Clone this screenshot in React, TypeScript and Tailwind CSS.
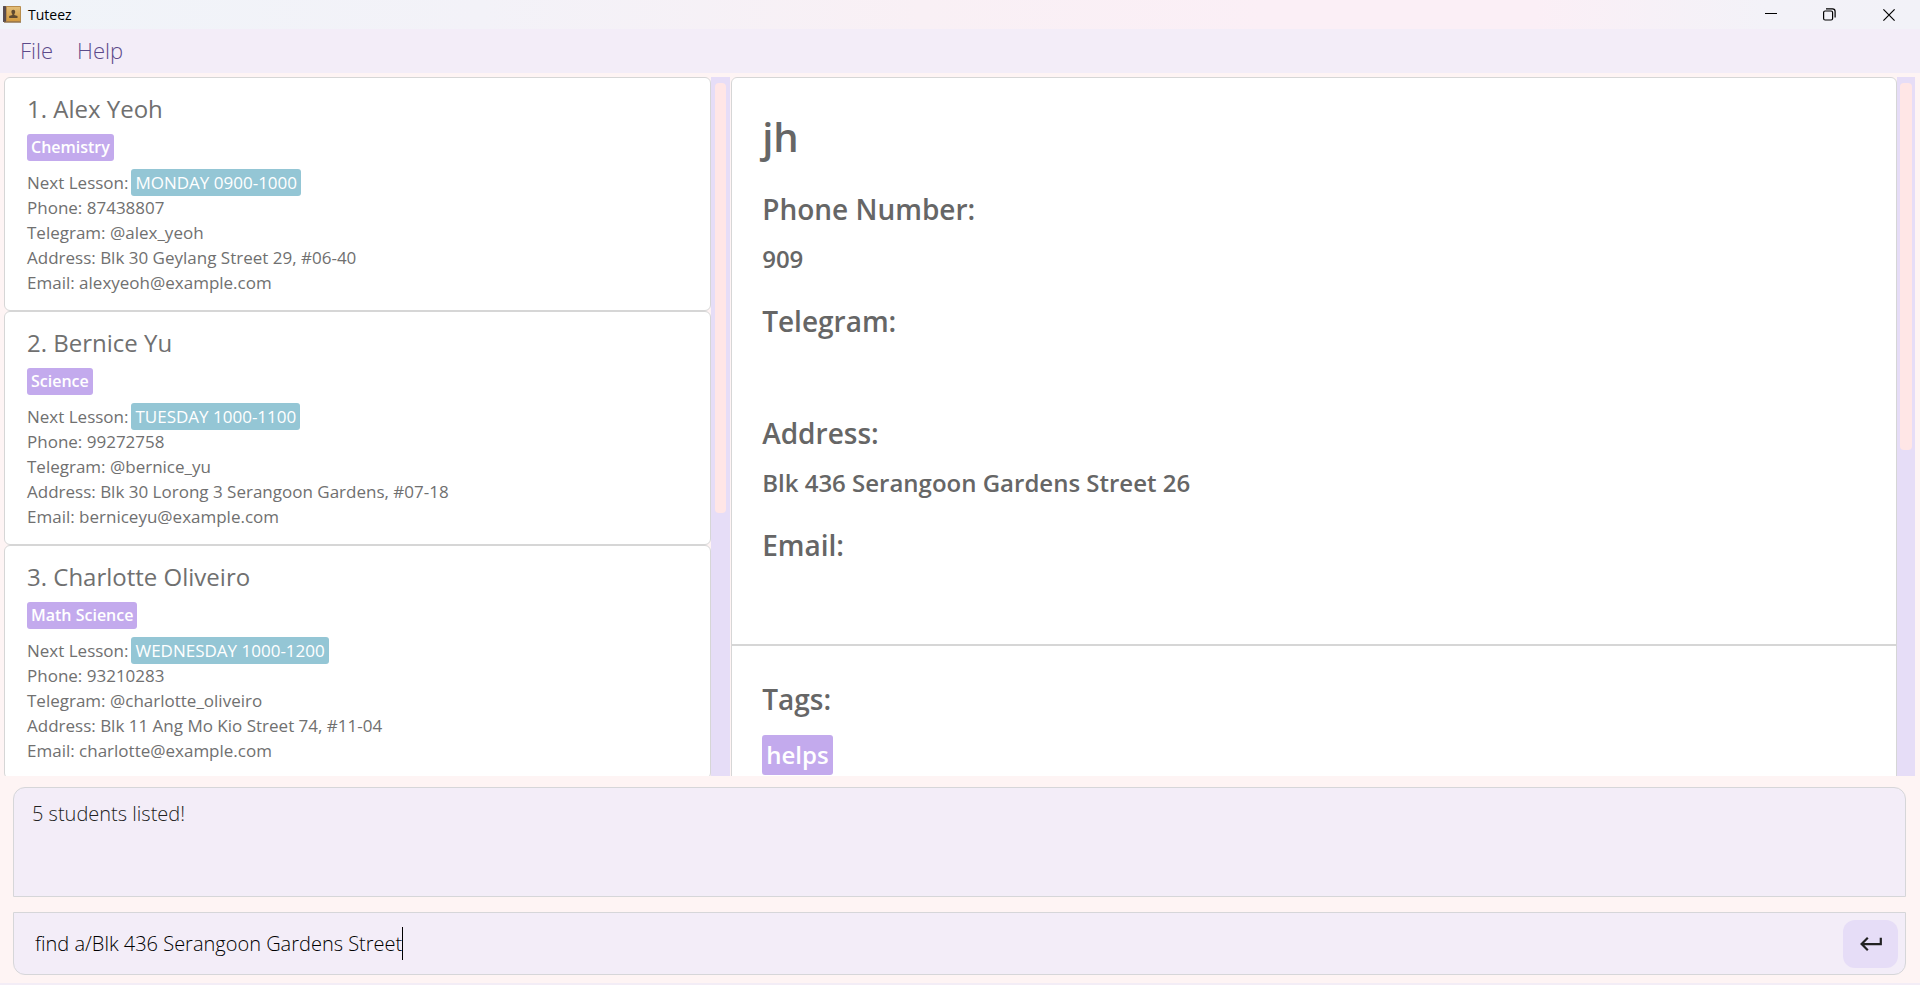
import React from "react";

type Student = {
  name: string;
  subject: string;
  lesson: string;
  phone: string;
  telegram: string;
  address: string;
  email: string;
};

const students: Student[] = [
  {
    name: "Alex Yeoh",
    subject: "Chemistry",
    lesson: "MONDAY 0900-1000",
    phone: "87438807",
    telegram: "@alex_yeoh",
    address: "Blk 30 Geylang Street 29, #06-40",
    email: "alexyeoh@example.com",
  },
  {
    name: "Bernice Yu",
    subject: "Science",
    lesson: "TUESDAY 1000-1100",
    phone: "99272758",
    telegram: "@bernice_yu",
    address: "Blk 30 Lorong 3 Serangoon Gardens, #07-18",
    email: "berniceyu@example.com",
  },
  {
    name: "Charlotte Oliveiro",
    subject: "Math Science",
    lesson: "WEDNESDAY 1000-1200",
    phone: "93210283",
    telegram: "@charlotte_oliveiro",
    address: "Blk 11 Ang Mo Kio Street 74, #11-04",
    email: "charlotte@example.com",
  },
];

const details = [
  { label: "Phone Number:", value: "909" },
  { label: "Telegram:", value: "" },
  { label: "Address:", value: "Blk 436 Serangoon Gardens Street 26" },
  { label: "Email:", value: "" },
];

function AppIcon() {
  return (
    <svg width="18" height="17" viewBox="0 0 18 17" aria-hidden="true">
      <defs>
        <linearGradient id="cover" x1="0" y1="0" x2="0" y2="1">
          <stop offset="0" stopColor="#e2bd78" />
          <stop offset="1" stopColor="#d29a40" />
        </linearGradient>
      </defs>
      <rect x="0" y="0" width="18" height="16" rx="0.8" fill="#b98d4c" />
      <rect x="4" y="1" width="13" height="14" fill="url(#cover)" />
      <rect x="0" y="0" width="3" height="16" rx="0.6" fill="#574c50" />
      <rect x="1" y="15.5" width="17" height="1.2" fill="#8a6d44" />
      <path
        d="M10.3 3.800c1.200 0 1.900.9 1.900 2.100 0 .9-.4 1.600-.9 2v1.200l3.200 1v2H6.200v-2l3.100-1V7.900c-.5-.4-.9-1.100-.9-2 0-1.200.7-2.100 1.900-2.100z"
        fill="#604a30"
      />
    </svg>
  );
}

function TitleBar() {
  return (
    <header className="flex h-[29px] shrink-0 items-center justify-between bg-[linear-gradient(90deg,#f0f4f9_0%,#f3f2f8_25%,#f9f0f5_48%,#fbeff6_66%,#fbeff6_80%,#f3f2f8_92%,#f2f2f8_100%)] pl-[3px]">
      <div className="flex items-center gap-[7px] text-[14px] leading-5 text-black">
        <AppIcon />
        <span>Tuteez</span>
      </div>
      <div className="flex h-full">
        <button type="button" aria-label="Minimize" className="flex h-full w-[58px] items-center justify-center">
          <svg width="12" height="12" viewBox="0 0 12 12" fill="none" stroke="#000">
            <path d="M0 4.500H12" />
          </svg>
        </button>
        <button type="button" aria-label="Restore" className="flex h-full w-[58px] items-center justify-center">
          <svg width="13" height="13" viewBox="0 0 13 13" fill="none" stroke="#000" strokeWidth="1.200">
            <rect x="0.600" y="3" width="9" height="9" rx="1.500" />
            <path d="M3 0.800H9.500Q12.100 .8 12.100 3.400V9.600" />
          </svg>
        </button>
        <button type="button" aria-label="Close" className="flex h-full w-[62px] items-center justify-center">
          <svg width="12" height="12" viewBox="0 0 12 12" fill="none" stroke="#000" strokeWidth="1.200">
            <path d="M.4.4 11.600 11.600M11.600.4.4 11.600" />
          </svg>
        </button>
      </div>
    </header>
  );
}

function StudentCard({ student, index }: { student: Student; index: number }) {
  return (
    <li className="shrink-0 rounded-md border border-[#d6d6d6] bg-white px-[22px] pt-[15px] pb-[15px] text-[17px] leading-[25px] text-[#707070]">
      <h2 className="text-[24px] leading-8">
        {index}. {student.name}
      </h2>
      <div className="mt-[9px] mb-2 flex">
        <span className="rounded-[3px] bg-[#c3aaed] px-1 text-[16px] leading-[27px] font-semibold text-white">{student.subject}</span>
      </div>
      <div className="flex h-[26px] items-center gap-[3px] leading-[27px]">
        <span>Next Lesson:</span>
        <span className="rounded-[3px] bg-[#94c6d5] px-1 text-white">{student.lesson}</span>
      </div>
      <p>Phone: {student.phone}</p>
      <p>Telegram: {student.telegram}</p>
      <p>Address: {student.address}</p>
      <p>Email: {student.email}</p>
    </li>
  );
}

function DetailPane() {
  return (
    <article className="min-w-0 flex-1 self-start rounded-t-md border border-[#d6d6d6] bg-white text-[#666]">
      <section className="border-b-2 border-[#d6d6d6] px-[30px] pt-[29px] pb-[5px]">
        <h1 className="mb-6 text-[40px] leading-[60px] font-semibold">jh</h1>
        <dl>
          {details.map((item) => (
            <div key={item.label} className="h-28">
              <dt className="text-[28px] leading-9 font-semibold">{item.label}</dt>
              <dd className="mt-4 text-[24px] leading-8 font-semibold">{item.value}</dd>
            </div>
          ))}
        </dl>
      </section>
      <section className="px-[30px] pt-[35px] pb-40">
        <h2 className="mb-[18px] text-[28px] leading-9 font-semibold">Tags:</h2>
        <div className="flex">
          <span className="rounded-[3px] bg-[#c3aaed] px-1 text-[24px] leading-10 font-semibold text-white">helps</span>
        </div>
      </section>
    </article>
  );
}

export default function App() {
  return (
    <div className="flex h-screen flex-col bg-[#fef4f4] font-['Open_Sans','Noto_Sans',sans-serif]">
      <TitleBar />
      <nav className="flex h-11 shrink-0 items-center gap-6 bg-[#f3edf8] px-5 pb-[2px] text-[22px] leading-8 font-light text-[#5c4a8a]">
        <button type="button">File</button>
        <button type="button">Help</button>
      </nav>

      <main className="flex min-h-0 flex-1 overflow-hidden pt-1 pr-[5px] pl-1">
        <div className="flex w-[38%] shrink-0 overflow-hidden">
          <ol className="flex min-w-0 flex-1 flex-col overflow-hidden">
            {students.map((student, i) => (
              <StudentCard key={student.name} student={student} index={i + 1} />
            ))}
          </ol>
          <div className="w-[19px] shrink-0 bg-[#e6ddf7] px-1 pt-[6px]">
            <div className="h-[62%] rounded bg-[#ffe6e6]" />
          </div>
        </div>
        <div className="ml-px flex min-w-0 flex-1 overflow-hidden">
          <DetailPane />
          <div className="w-[18px] shrink-0 bg-[#e6ddf7] px-[3px] pt-[6px]">
            <div className="h-[53%] rounded bg-[#ffe6e6]" />
          </div>
        </div>
      </main>

      <footer className="shrink-0 border-b-2 border-[#f3edf6] pt-[11px] pr-[14px] pb-2 pl-[13px]">
        <output className="block h-[110px] rounded-t-xl border border-[#d6d6d9] bg-[#f3edf8] px-[18px] pt-[10px] text-[20px] leading-8 font-light text-[#222]">
          5 students listed!
        </output>
        <form
          className="mt-[15px] flex h-[63px] items-center rounded-b-xl border border-[#d6d6d9] bg-[#f3edf8] pr-[7px] pl-[21px]"
          onSubmit={(event) => event.preventDefault()}
        >
          <div className="flex min-w-0 flex-1 items-center">
            <input
              type="text"
              aria-label="Command"
              defaultValue="find a/Blk 436 Serangoon Gardens Street"
              className="field-sizing-content bg-transparent text-[20px] leading-8 font-light text-black caret-transparent outline-none"
            />
            <span className="h-[33px] w-px bg-black" />
          </div>
          <button
            type="submit"
            aria-label="Enter"
            className="flex h-12 w-[55px] items-center justify-center rounded-xl bg-[#e6ddf7]"
          >
            <svg width="22" height="14" viewBox="0 0 22 14" fill="none" stroke="#222" strokeWidth="2.200">
              <path d="M20.800 .8V7.200H2M7.800 .8 1.600 7 7.800 13.200" />
            </svg>
          </button>
        </form>
      </footer>
    </div>
  );
}
